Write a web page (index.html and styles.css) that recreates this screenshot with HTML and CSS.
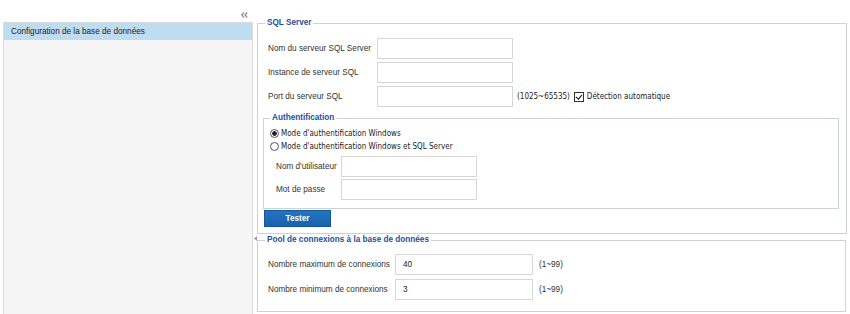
FILE: index.html
```html
<!DOCTYPE html>
<html lang="fr">
<head>
  <meta charset="UTF-8">
  <meta name="viewport" content="width=device-width, initial-scale=1.0">
  <title>Configuration de la base de données</title>
  <link rel="stylesheet" href="styles.css">
</head>
<body>
  <div class="topbar">
    <span class="collapse-btn" title="Réduire">
      <svg width="7" height="6" viewBox="0 0 7 6"><path d="M3 0.5 L0.8 3 L3 5.5 M6.2 0.5 L4 3 L6.2 5.5" fill="none" stroke="#8a8a8a" stroke-width="1.2"/></svg>
    </span>
  </div>
  <div class="layout">
    <aside class="sidebar">
      <div class="nav-item active">Configuration de la base de données</div>
    </aside>
    <div class="splitter">
      <svg class="splitter-handle" width="3" height="5" viewBox="0 0 3 5"><path d="M3 0 L0 2.5 L3 5 Z" fill="#9a9a9a"/></svg>
    </div>
    <main class="content">
      <!-- Serveur SQL -->
      <fieldset class="group">
        <legend>SQL Server</legend>
        <div class="rows rows-sql">
          <div class="form-row">
            <label class="form-label">Nom du serveur SQL Server</label>
            <input type="text" class="form-input">
          </div>
          <div class="form-row">
            <label class="form-label">Instance de serveur SQL</label>
            <input type="text" class="form-input">
          </div>
          <div class="form-row">
            <label class="form-label">Port du serveur SQL</label>
            <input type="text" class="form-input">
            <span class="hint hint-alt">(1025~65535)</span>
            <label class="check-label"><input type="checkbox" class="check" checked> Détection automatique</label>
          </div>
        </div>

        <fieldset class="group sub-group">
          <legend>Authentification</legend>
          <div class="radio-list">
            <label class="radio-row"><input type="radio" name="auth" class="radio" checked> Mode d'authentification Windows</label>
            <label class="radio-row"><input type="radio" name="auth" class="radio"> Mode d'authentification Windows et SQL Server</label>
          </div>
          <div class="rows rows-auth">
            <div class="form-row">
              <label class="form-label">Nom d'utilisateur</label>
              <input type="text" class="form-input">
            </div>
            <div class="form-row">
              <label class="form-label">Mot de passe</label>
              <input type="password" class="form-input">
            </div>
          </div>
        </fieldset>
        <button class="btn-test">Tester</button>
      </fieldset>

      <!-- Pool de connexions -->
      <fieldset class="group group-pool">
        <legend>Pool de connexions à la base de données</legend>
        <div class="rows rows-pool">
          <div class="form-row">
            <label class="form-label">Nombre maximum de connexions</label>
            <input type="text" class="form-input" value="40">
            <span class="hint">(1~99)</span>
          </div>
          <div class="form-row">
            <label class="form-label">Nombre minimum de connexions</label>
            <input type="text" class="form-input" value="3">
            <span class="hint">(1~99)</span>
          </div>
        </div>
      </fieldset>
    </main>
  </div>
</body>
</html>
```

FILE: styles.css
```css
html, body {
  margin: 0;
  height: 100%;
  overflow: hidden;
}
body {
  font-family: "Liberation Sans", Arial, sans-serif;
  font-size: 8.2px;
  color: #333;
  background-color: #fff;
}
.topbar {
  height: 18px;
  box-sizing: border-box;
  padding: 12px 0 0 241px;
}
.collapse-btn {
  display: block;
  width: 7px;
  height: 6px;
  line-height: 0;
}
.layout {
  display: flex;
  height: 296px;
}
.sidebar {
  width: 250px;
  margin: 4px 0 0 3px;
  box-sizing: border-box;
  background-color: #f5f5f5;
  border: 1px solid #dadada;
  border-bottom: none;
}
.nav-item {
  height: 17px;
  line-height: 17px;
  padding-left: 7px;
  color: #222;
}
.nav-item.active {
  background-color: #bfddf0;
}
.splitter {
  width: 4px;
  display: flex;
  flex-direction: column;
  align-items: center;
}
.splitter-handle {
  margin-top: 218px;
}
.content {
  width: 590px;
}
.group {
  margin: 0;
  min-width: 0;
  border: 1px solid #ced1d9;
  padding: 0 7px 6px 5px;
}
.group legend {
  font-weight: bold;
  color: #1e4f9c;
  padding: 0 2px;
  margin-left: 2px;
  line-height: 10px;
}
.rows {
  display: flex;
  flex-direction: column;
}
.form-row {
  display: flex;
  align-items: center;
  height: 21px;
  padding-left: 5px;
}
.form-label {
  flex: none;
}
.form-input {
  flex: none;
  width: 136px;
  height: 21px;
  box-sizing: border-box;
  margin: 0;
  border: 1px solid #d6d6d6;
  padding: 0 7px;
  font-family: "Liberation Sans", Arial, sans-serif;
  font-size: 8.2px;
  color: #222;
  background-color: #fff;
  outline: none;
}
.rows-sql {
  margin-top: 10px;
  gap: 3px;
}
.rows-sql .form-label {
  width: 109px;
}
.hint {
  margin-left: 6px;
}
.hint-alt,
.check-label,
.radio-row {
  font-family: "DejaVu Sans Condensed", "DejaVu Sans", Tahoma, sans-serif;
  font-size: 8px;
  color: #222;
}
.hint-alt {
  margin-left: 4px;
}
.check-label {
  display: flex;
  align-items: center;
  margin-left: 4px;
}
.check {
  appearance: none;
  -webkit-appearance: none;
  width: 10px;
  height: 10px;
  margin: 0 3px 0 0;
  border: 1px solid #333;
  background-color: #fff;
  position: relative;
}
.check:checked::after {
  content: "";
  position: absolute;
  left: 2.5px;
  top: 0px;
  width: 2.5px;
  height: 5px;
  border: solid #111;
  border-width: 0 1.5px 1.5px 0;
  transform: rotate(40deg);
}
.sub-group {
  margin-top: 6px;
  padding: 0 0 8px 4px;
}
.radio-list {
  margin-top: 4px;
  display: flex;
  flex-direction: column;
}
.radio-row {
  display: flex;
  align-items: center;
  height: 13px;
  padding-left: 2px;
}
.radio {
  appearance: none;
  -webkit-appearance: none;
  width: 9px;
  height: 9px;
  margin: 0 2px 0 0;
  border: 1px solid #555;
  border-radius: 50%;
  background-color: #fff;
}
.radio:checked {
  background: radial-gradient(circle, #222 0, #222 2px, #fff 2.6px);
}
.rows-auth {
  margin-top: 3px;
  gap: 2px;
}
.rows-auth .form-row {
  padding-left: 8px;
}
.rows-auth .form-label {
  width: 65px;
}
.btn-test {
  display: block;
  margin: 1px 0 0 1px;
  width: 67px;
  height: 17px;
  padding: 0;
  border: 1px solid #14589c;
  background: linear-gradient(#2374c0, #1863ab);
  color: #fff;
  font-family: "Liberation Sans", Arial, sans-serif;
  font-size: 8.2px;
  font-weight: bold;
  cursor: pointer;
}
.group-pool {
  margin-top: 1px;
  padding-bottom: 11px;
  width: 589px;
  box-sizing: border-box;
}
.rows-pool {
  margin-top: 9px;
  gap: 4px;
}
.rows-pool .form-label {
  width: 127px;
}
.rows-pool .form-input {
  width: 138px;
}
```
